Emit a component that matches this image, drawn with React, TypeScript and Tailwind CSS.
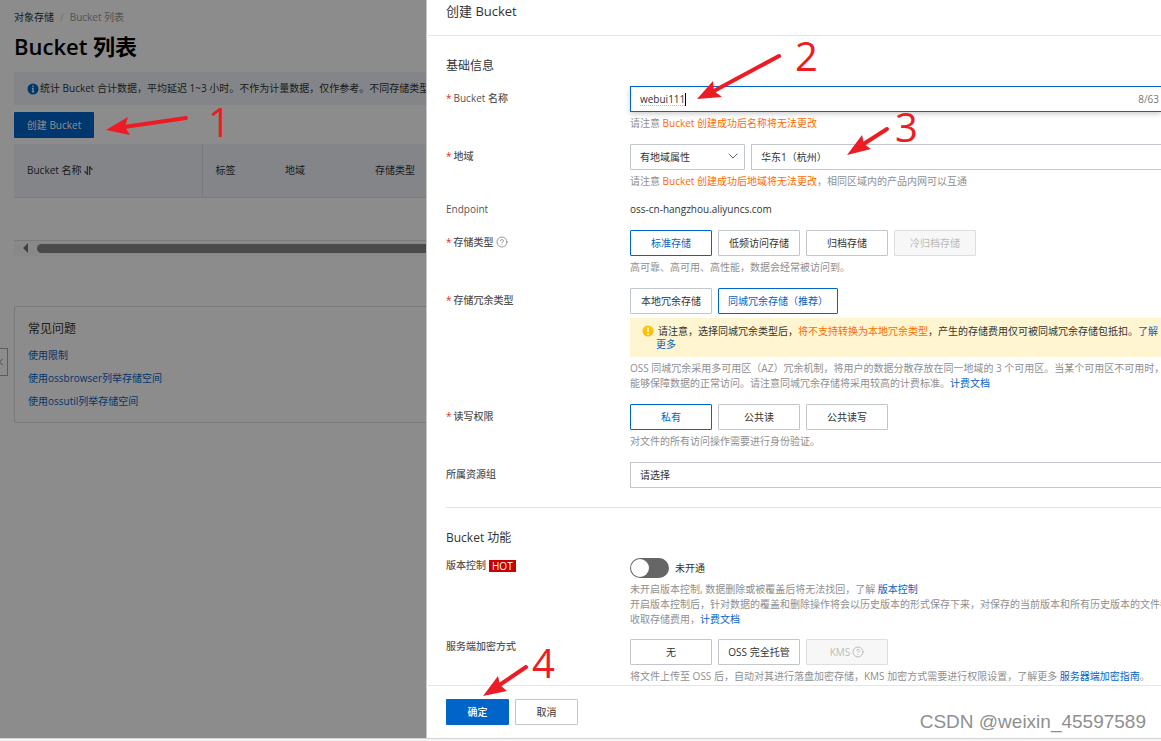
import { useState } from 'react'
import type { ReactNode } from 'react'
import clsx from 'clsx'
import { ChevronDown, ChevronLeft, CircleHelp } from 'lucide-react'

const faqLinks = ['使用限制', '使用ossbrowser列举存储空间', '使用ossutil列举存储空间']

// Arrow shaft + head, in page pixels
const arrows = [
  { shaft: 'M186 118 L124 127', head: '106,130 128,117 125,127 130,135' },
  { shaft: 'M779 56 L712 92', head: '697,99 713,81 714,91 722,97' },
  { shaft: 'M887 129 L862 145', head: '847,155 862,135 864,144 871,149' },
  { shaft: 'M526 667 L498 686', head: '483,696 498,676 500,685 507,691' },
]

const steps = [
  { n: '1', x: 208, y: 137 },
  { n: '2', x: 795, y: 71 },
  { n: '3', x: 895, y: 142 },
  { n: '4', x: 532, y: 678 },
]

type Option = { label: string; wide?: boolean; disabled?: boolean; help?: boolean }

function OptionGroup({ name, options, initial }: { name: string; options: Option[]; initial?: string }) {
  const [value, setValue] = useState(initial)
  return (
    <div className="flex gap-[6px]" role="radiogroup" aria-label={name}>
      {options.map((o) => (
        <label
          key={o.label}
          className={clsx(
            'flex h-[26px] shrink-0 items-center justify-center gap-[2px] whitespace-nowrap rounded-[1px] border',
            o.wide ? 'w-[120px]' : 'w-[82px]',
            o.disabled
              ? 'border-[#dedede] bg-[#f7f7f7] text-[#bbb]'
              : value === o.label
                ? 'border-[#0064c8] text-[#0064c8]'
                : 'border-[#c0c6cc] text-[#333]',
          )}
        >
          <input
            type="radio"
            name={name}
            className="sr-only"
            disabled={o.disabled}
            checked={value === o.label}
            onChange={() => setValue(o.label)}
          />
          {o.label}
          {o.help && <CircleHelp size={12} strokeWidth={2} />}
        </label>
      ))}
    </div>
  )
}

function Row({
  label,
  required,
  tight,
  extra,
  htmlFor,
  children,
}: {
  label: string
  required?: boolean
  tight?: boolean
  extra?: ReactNode
  htmlFor?: string
  children: ReactNode
}) {
  return (
    <div className="grid grid-cols-[184px_minmax(0,1fr)]">
      <div className={clsx('flex items-center self-start font-medium text-[#555]', tight ? 'h-[15px]' : 'h-6')}>
        {required && <span className="mr-[2px] text-[#d93026]">*</span>}
        <label htmlFor={htmlFor}>{label}</label>
        {extra}
      </div>
      <div className="min-w-0">{children}</div>
    </div>
  )
}

function Help({ children }: { children: ReactNode }) {
  return <p className="mt-1 overflow-hidden whitespace-nowrap text-[#8f8f8f]">{children}</p>
}

function Link({ children }: { children: ReactNode }) {
  return (
    <a href="#" className="text-[#0064c8]">
      {children}
    </a>
  )
}

function BucketPage() {
  return (
    <section className="relative w-[426px] shrink-0 overflow-hidden bg-white pl-[14px] text-[#333]">
      <nav className="flex gap-[6px] pt-[10px]">
        <a href="#">对象存储</a>
        <span className="text-[#ccc]">/</span>
        <span className="text-[#999]">Bucket 列表</span>
      </nav>
      <h1 className="mt-[7px] text-[22px] leading-7 font-semibold text-black">Bucket 列表</h1>

      <div className="mt-3 flex h-[33px] items-center gap-px bg-[#eff3f8] pl-[13px] whitespace-nowrap">
        <svg className="size-3 shrink-0" viewBox="0 0 12 12">
          <circle cx="6" cy="6" r="5.5" fill="#0064c8" />
          <path d="M6 2.6v1.4M5 5.4h1v3.4M4.8 8.9h2.4" stroke="#fff" strokeWidth="1.3" fill="none" />
        </svg>
        <p>统计 Bucket 合计数据，平均延迟 1~3 小时。不作为计量数据，仅作参考。不同存储类型的</p>
      </div>

      <button className="mt-[7px] h-[26px] w-20 rounded-[1px] bg-[#0064c8] text-white">创建 Bucket</button>

      <table className="mt-[6px] w-full table-fixed text-left">
        <thead>
          <tr className="h-[53px] border-b border-[#dde0e4] bg-[#eff3f8]">
            <th className="w-[188px] border-r border-[#dde0e4] pl-[13px] font-normal">
              <span className="inline-flex items-center gap-[3px]">
                Bucket 名称
                <svg className="size-[9px]" viewBox="0 0 9 9" fill="none" stroke="#555" strokeWidth="1.3">
                  <path d="M3.4 0v8.2L.5 5.2M5.6 9V.8l2.9 3" />
                </svg>
              </span>
            </th>
            <th className="w-[70px] pl-[13px] font-normal">标签</th>
            <th className="w-[90px] pl-[13px] font-normal">地域</th>
            <th className="pl-[13px] font-normal">存储类型</th>
          </tr>
        </thead>
        <tbody>
          <tr className="h-[43px] border-b border-[#dedede]">
            <td colSpan={4} />
          </tr>
        </tbody>
      </table>

      <div className="flex h-[15px] items-center bg-[#fafafa] pl-[9px]">
        <svg className="h-[10px] w-[6px]" viewBox="0 0 6 10">
          <path d="M5 0v10L0 5z" fill="#777" />
        </svg>
        <div className="ml-2 h-[9px] flex-1 rounded-l-full bg-[#888]" />
      </div>

      <div className="mt-[50px] rounded-l-[3px] border border-r-0 border-[#dedede] pt-3 pb-[13px] pl-[13px]">
        <h2 className="text-[12px] leading-5">常见问题</h2>
        <ul className="mt-[9px] flex flex-col gap-2">
          {faqLinks.map((text) => (
            <li key={text}>
              <Link>{text}</Link>
            </li>
          ))}
        </ul>
      </div>

      {/* collapsed side menu handle */}
      <button
        aria-label="展开菜单"
        className="absolute top-[348px] left-0 flex h-7 w-2 items-center justify-end border border-l-0 border-[#aaa] bg-white text-[#888]"
      >
        <ChevronLeft size={12} className="shrink-0" />
      </button>

      {/* modal mask */}
      <div className="absolute inset-0 bg-black/45" />
    </section>
  )
}

function CreateDrawer() {
  const [name, setName] = useState('webui111')
  const [versioning, setVersioning] = useState(false)

  return (
    <section className="min-w-0 flex-1 overflow-hidden bg-white text-[#333] shadow-[inset_1px_0_0_#c8c8c8]">
      <header className="border-b border-[#e5e5e5] pb-[13px] pl-5">
        <h2 className="text-[13px] leading-[22px]">创建 Bucket</h2>
      </header>

      <form className="pl-5">
        <h3 className="mt-5 text-[12px] leading-5">基础信息</h3>

        <div className="mt-[10px] flex flex-col gap-[13px]">
          <Row label="Bucket 名称" required htmlFor="bucket-name">
            <div className="relative flex h-[26px] items-center border border-r-0 border-[#0064c8] pr-[2px] pl-[9px] shadow-[0_2px_5px_rgba(0,0,0,0.2)]">
              <input
                id="bucket-name"
                value={name}
                onChange={(e) => setName(e.target.value)}
                className="min-w-0 flex-1 underline decoration-[#f0a0a0] decoration-dotted underline-offset-2 outline-none"
              />
              <span className="text-[#777]">8/63</span>
              <span className="absolute top-[6px] left-[54px] h-[13px] w-px bg-black" />
            </div>
            <Help>
              请注意 <span className="text-[#ff6a00]">Bucket 创建成功后名称将无法更改</span>
            </Help>
          </Row>

          <Row label="地域" required htmlFor="region-kind">
            <div className="flex gap-[6px]">
              <div className="relative w-[115px]">
                <select
                  id="region-kind"
                  className="h-[26px] w-full appearance-none rounded-[1px] border border-[#c0c6cc] pl-[9px]"
                >
                  <option>有地域属性</option>
                </select>
                <ChevronDown size={16} strokeWidth={1.5} className="absolute top-[4px] right-[4px] text-[#666]" />
              </div>
              <select
                aria-label="地域"
                className="h-[26px] min-w-0 flex-1 appearance-none border border-r-0 border-[#c0c6cc] pl-[9px]"
              >
                <option>华东1（杭州）</option>
              </select>
            </div>
            <Help>
              请注意 <span className="text-[#ff6a00]">Bucket 创建成功后地域将无法更改</span>
              ，相同区域内的产品内网可以互通
            </Help>
          </Row>

          <Row label="Endpoint" tight>
            <p>oss-cn-hangzhou.aliyuncs.com</p>
          </Row>

          <Row
            label="存储类型"
            required
            extra={<CircleHelp size={12} strokeWidth={1.5} className="ml-[2px] text-[#777]" />}
          >
            <OptionGroup
              name="存储类型"
              initial="标准存储"
              options={[
                { label: '标准存储' },
                { label: '低频访问存储' },
                { label: '归档存储' },
                { label: '冷归档存储', disabled: true },
              ]}
            />
            <Help>高可靠、高可用、高性能，数据会经常被访问到。</Help>
          </Row>

          <Row label="存储冗余类型" required>
            <OptionGroup
              name="存储冗余类型"
              initial="同城冗余存储（推荐）"
              options={[{ label: '本地冗余存储' }, { label: '同城冗余存储（推荐）', wide: true }]}
            />
            <div className="mt-1 flex gap-[2px] overflow-hidden bg-[#fff6d1] pt-[7px] pb-[6px] pl-3 leading-[13px] whitespace-nowrap">
              <svg className="size-3 shrink-0" viewBox="0 0 12 12">
                <circle cx="6" cy="6" r="5.5" fill="#ffc107" />
                <path d="M6 2.5v4.4M6 8.2v1.5" stroke="#fff" strokeWidth="1.5" />
              </svg>
              <p className="indent-[2px]">
                请注意，选择同城冗余类型后，<span className="text-[#ff6a00]">将不支持转换为本地冗余类型</span>
                ，产生的存储费用仅可被同城冗余存储包抵扣。
                <a href="#" className="text-[#0064c8]">
                  了解
                  <br />
                  更多
                </a>
              </p>
            </div>
            <Help>
              OSS 同城冗余采用多可用区（AZ）冗余机制，将用户的数据分散存放在同一地域的 3 个可用区。当某个可用区不可用时，仍
              <br />
              能够保障数据的正常访问。请注意同城冗余存储将采用较高的计费标准。<Link>计费文档</Link>
            </Help>
          </Row>

          <Row label="读写权限" required>
            <OptionGroup
              name="读写权限"
              initial="私有"
              options={[{ label: '私有' }, { label: '公共读' }, { label: '公共读写' }]}
            />
            <Help>对文件的所有访问操作需要进行身份验证。</Help>
          </Row>

          <Row label="所属资源组" htmlFor="resource-group">
            <select
              id="resource-group"
              className="h-[26px] w-full appearance-none border border-r-0 border-[#c0c6cc] pl-[9px]"
            >
              <option>请选择</option>
            </select>
          </Row>
        </div>

        <hr className="mt-[19px] border-[#e0e0e0]" />
        <h3 className="mt-5 text-[12px] leading-5">Bucket 功能</h3>

        <div className="mt-[10px] flex flex-col gap-3">
          <Row
            label="版本控制"
            tight
            htmlFor="versioning"
            extra={<span className="ml-[3px] bg-[#c80000] px-[3px] leading-3 text-white">HOT</span>}
          >
            <div className="flex h-5 items-center gap-[6px]">
              <label
                className={clsx(
                  'flex h-5 w-[39px] items-center rounded-full p-px',
                  versioning ? 'justify-end bg-[#0064c8]' : 'bg-[#666]',
                )}
              >
                <input
                  id="versioning"
                  type="checkbox"
                  role="switch"
                  className="sr-only"
                  checked={versioning}
                  onChange={(e) => setVersioning(e.target.checked)}
                />
                <span className="size-[18px] rounded-full bg-white" />
              </label>
              <span>未开通</span>
            </div>
            <Help>
              未开启版本控制, 数据删除或被覆盖后将无法找回，了解 <Link>版本控制</Link>
              <br />
              开启版本控制后，针对数据的覆盖和删除操作将会以历史版本的形式保存下来，对保存的当前版本和所有历史版本的文件都
              <br />
              收取存储费用，<Link>计费文档</Link>
            </Help>
          </Row>

          <Row label="服务端加密方式" tight>
            <OptionGroup
              name="服务端加密方式"
              options={[{ label: '无' }, { label: 'OSS 完全托管' }, { label: 'KMS', disabled: true, help: true }]}
            />
            <Help>
              将文件上传至 OSS 后，自动对其进行落盘加密存储，KMS 加密方式需要进行权限设置，了解更多{' '}
              <Link>服务器端加密指南</Link>。
            </Help>
          </Row>
        </div>
      </form>

      <footer className="mt-px flex gap-[6px] border-t border-[#e5e5e5] py-[13px] pl-5">
        <button className="h-[26px] w-[63px] rounded-[1px] bg-[#0064c8] font-medium text-white">确定</button>
        <button className="h-[26px] w-[63px] rounded-[1px] border border-[#c0c6cc]">取消</button>
      </footer>
    </section>
  )
}

function Annotations() {
  return (
    <svg className="pointer-events-none absolute inset-0 h-full w-full" fill="#ed1c24">
      {arrows.map((a) => (
        <g key={a.head}>
          <path d={a.shaft} stroke="#ed1c24" strokeWidth="4" strokeLinecap="round" />
          <polygon points={a.head} />
        </g>
      ))}
      {steps.map((s) => (
        <text key={s.n} x={s.x} y={s.y} fontSize="40">
          {s.n}
        </text>
      ))}
    </svg>
  )
}

export default function App() {
  return (
    <main className="relative flex min-h-screen flex-col overflow-hidden bg-[#f5f5f5] font-['Open_Sans','Noto_Sans_CJK_SC',sans-serif] text-[10px] leading-[15px]">
      <div className="flex">
        <BucketPage />
        <CreateDrawer />
      </div>
      <div className="h-px bg-[#d4d4d4]" />
      <Annotations />
      <p className="absolute right-[15px] bottom-[7px] font-['Liberation_Sans',sans-serif] text-[19px] leading-6 text-[#8f8f8f]">
        CSDN @weixin_45597589
      </p>
    </main>
  )
}
